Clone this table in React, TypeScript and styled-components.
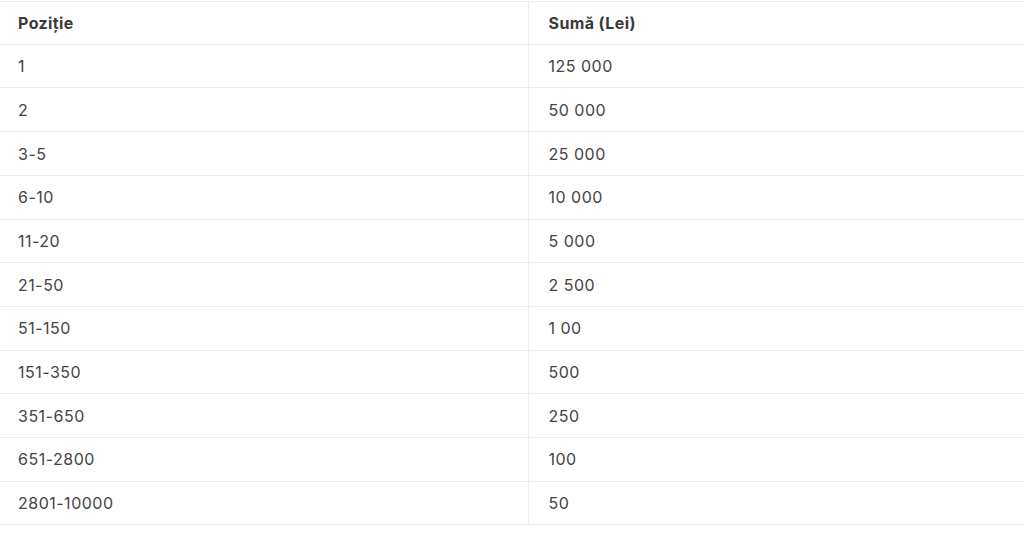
import React from "react";
import styled, { createGlobalStyle } from "styled-components";

const rows: [string, string][] = [
  ["1", "125 000"],
  ["2", "50 000"],
  ["3-5", "25 000"],
  ["6-10", "10 000"],
  ["11-20", "5 000"],
  ["21-50", "2 500"],
  ["51-150", "1 00"],
  ["151-350", "500"],
  ["351-650", "250"],
  ["651-2800", "100"],
  ["2801-10000", "50"],
];

function App() {
  return (
    <>
      <GlobalStyles />
      <Page>
        <Table>
          <colgroup>
            <col style={{ width: 528 }} />
            <col />
          </colgroup>
          <thead>
            <Row head>
              <HeadCell>Poziție</HeadCell>
              <HeadCell second>Sumă (Lei)</HeadCell>
            </Row>
          </thead>
          <tbody>
            {rows.map(([pos, sum]) => (
              <Row key={pos}>
                <Cell>{pos}</Cell>
                <Cell second>{sum}</Cell>
              </Row>
            ))}
          </tbody>
        </Table>
      </Page>
    </>
  );
}

export default App;

const GlobalStyles = createGlobalStyle`
  body {
    margin: 0;
    background: #ffffff;
    font-family: Inter, "Noto Sans", sans-serif;
    overflow: hidden;
  }
`;

const Page = styled.div`
  padding-top: 1px;
`;

const Table = styled.table`
  width: 100%;
  border-collapse: collapse;
  table-layout: fixed;
  border-top: 1px solid #ededed;
`;

const Row = styled.tr<{ head?: boolean }>`
  height: ${({ head }) => (head ? "42.8px" : "43.7px")};
  border-bottom: 1px solid #ededed;
`;

const HeadCell = styled.th<{ second?: boolean }>`
  text-align: left;
  padding: 0 0 0 ${({ second }) => (second ? "20px" : "18px")};
  font-size: 16px;
  font-weight: 700;
  letter-spacing: 0.4px;
  color: #3a3a3a;
  border-left: ${({ second }) => (second ? "1px solid #ededed" : "none")};
`;

const Cell = styled.td<{ second?: boolean }>`
  padding: 0 0 0 ${({ second }) => (second ? "20px" : "18px")};
  font-size: 16px;
  letter-spacing: 0.5px;
  color: #444444;
  border-left: ${({ second }) => (second ? "1px solid #ededed" : "none")};
`;
